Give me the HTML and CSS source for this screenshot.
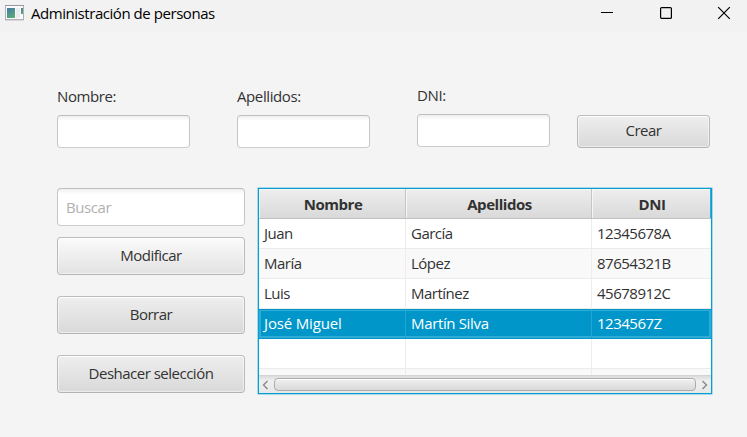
FILE: index.html
```html
<!DOCTYPE html>
<html lang="es">
<head>
<meta charset="utf-8">
<title>Administración de personas</title>
<link rel="stylesheet" href="styles.css">
</head>
<body>
<header class="titlebar">
  <svg class="app-icon" width="20" height="16" viewBox="0 0 20 16">
    <defs><linearGradient id="g" x1="0" y1="0" x2="0.5" y2="1"><stop offset="0" stop-color="#4478a2"/><stop offset="1" stop-color="#58ab7c"/></linearGradient></defs>
    <rect x="0.5" y="0.5" width="18" height="14" fill="#fbfbfc" stroke="#b0b1b7"/>
    <path d="M0 .5h19" stroke="#9697a6"/>
    <path d="M0 15.5h19" stroke="#d8d8d8"/>
    <rect x="2" y="3" width="8" height="10" fill="url(#g)"/>
    <rect x="11" y="3" width="4" height="10" fill="#ececef"/>
    <rect x="16" y="3" width="2" height="6" fill="url(#g)"/>
  </svg>
  <h1 class="title">Administración de personas</h1>
  <div class="controls">
    <svg width="14" height="14" viewBox="0 0 14 14"><path d="M1 6.5h12" stroke="#000"/></svg>
    <svg width="14" height="14" viewBox="0 0 14 14"><rect x="1.6" y="1.6" width="10.8" height="10.8" rx="1" fill="none" stroke="#000" stroke-width="1.2"/></svg>
    <svg width="14" height="14" viewBox="0 0 14 14"><path d="M1.2 1.2l11.6 11.6M12.8 1.2L1.2 12.8" stroke="#000" stroke-width="1.2"/></svg>
  </div>
</header>
<main>
  <form class="fields">
    <label class="field"><span>Nombre:</span><input class="input"></label>
    <label class="field"><span>Apellidos:</span><input class="input"></label>
    <label class="field raised"><span>DNI:</span><input class="input"></label>
    <button type="button" class="button crear">Crear</button>
  </form>
  <div class="content">
    <div class="side">
      <input class="input search" placeholder="Buscar">
      <button class="button hover">Modificar</button>
      <button class="button">Borrar</button>
      <button class="button">Deshacer selección</button>
    </div>
    <div class="table">
      <div class="row head"><div>Nombre</div><div>Apellidos</div><div>DNI</div></div>
      <div class="rows">
        <div class="row"><div>Juan</div><div>García</div><div>12345678A</div></div>
        <div class="row"><div>María</div><div>López</div><div>87654321B</div></div>
        <div class="row"><div>Luis</div><div>Martínez</div><div>45678912C</div></div>
        <div class="row selected"><div>José Miguel</div><div>Martín Silva</div><div>1234567Z</div></div>
        <div class="row"><div></div><div></div><div></div></div>
        <div class="row"><div></div><div></div><div></div></div>
      </div>
      <div class="scrollbar">
        <svg width="7" height="10" viewBox="0 0 7 10"><path d="M5.5 1L1.5 5l4 4" fill="none" stroke="#888" stroke-width="1.4"/></svg>
        <div class="thumb"></div>
        <svg width="7" height="10" viewBox="0 0 7 10"><path d="M1.5 1l4 4-4 4" fill="none" stroke="#888" stroke-width="1.4"/></svg>
      </div>
    </div>
  </div>
</main>
</body>
</html>
```
FILE: styles.css
```css
* { box-sizing: border-box; }
body {
  margin: 0;
  height: 437px;
  overflow: hidden;
  background: #f4f4f4;
  color: #323232;
  font: 15px/18px "Open Sans", "Noto Sans", sans-serif;
  letter-spacing: -0.5px;
}
.titlebar {
  display: flex;
  height: 32px;
  padding: 5px 16px 0 5px;
  background: #f2f2f2;
  color: #000;
}
.app-icon { margin-right: 6px; }
.title { margin: -1px auto 0 0; font-size: 15px; font-weight: 400; letter-spacing: -0.45px; }
.controls { display: flex; gap: 44px; padding-top: 1px; }
.controls svg:first-child { margin-right: 1px; }
main { padding: 55px 35px 0 57px; }
.fields { display: flex; gap: 47px; height: 101px; }
.field { display: block; width: 133px; }
.field span { display: block; height: 27px; letter-spacing: -0.4px; }
.raised { margin-top: -1px; }
.input, .button {
  display: block;
  width: 100%;
  height: 33px;
  margin: 0;
  border: 1px solid #c1c1c1;
  border-radius: 4px;
  color: #323232;
  font: inherit;
  letter-spacing: inherit;
}
.input {
  padding: 0 8px;
  border-color: #bebebe #c6c6c6 #cdcdcd;
  background: linear-gradient(#efefef, #fff 5px);
  outline: 0;
}
.input::placeholder { color: #b1b1b1; opacity: 1; letter-spacing: -0.4px; }
.button {
  padding: 0 0 3px;
  border-color: #bcbcbc #bababa #b4b4b4;
  background: linear-gradient(#eee, #d9d9d9);
  box-shadow: inset 0 0 0 1px #ffffff80, inset 0 1px #fff;
  text-align: center;
}
.field .input, .crear { position: relative; top: 0.5px; }
.crear { width: 133px; margin: 27px 0 0 -20px; }
.content { display: flex; gap: 13px; }
.side { display: flex; flex-direction: column; width: 188px; }
.side .input, .side .button { height: 38px; }
.side .button { margin-top: 21px; }
.side .hover { margin-top: 11px; background: linear-gradient(#fbfbfb, #e2e2e2); }
.table { width: 454px; height: 206px; border: 1px solid #079fd1; box-shadow: 0 0 0 0.5px #60bddc; background: #fff; }
.row { display: grid; grid-template-columns: 147px 186px 1fr; height: 30px; border-bottom: 1px solid #ebebeb; }
.row div { padding: 5px 5px 0; border-right: 1px solid #ededed; white-space: nowrap; }
.row div:last-child { border-right: 0; }
.row:nth-child(even) { background: #f9f9f9; }
.head { background: linear-gradient(#eee, #d9d9d9); border-color: #c1c1c1; font-weight: 700; text-align: center; letter-spacing: -0.45px; }
.row.head div { padding: 6px 4px 0 6px; border-color: #c5c5c5; box-shadow: inset 1px 1px #f6f6f6; }
.row.head div:last-child { border-right: 1px solid #30add7; }
.rows { height: 156px; overflow: hidden; }
.row.selected { background: #0096c9; color: #fff; border-color: #0096c9; box-shadow: inset 0 1px #0096c9, inset 0 0 0 2px #30abd5; letter-spacing: -0.15px; }
.row.selected div { border-color: #24a5d1; }
.selected div:nth-child(2) { letter-spacing: -0.35px; }
.selected div:last-child { letter-spacing: -0.5px; }
.scrollbar { display: flex; align-items: center; gap: 5px; height: 18px; padding: 0 3px; border-top: 1px solid #d4d4d4; background: linear-gradient(#dcdcdc, #efefef 5px, #e8e8e8); }
.thumb { flex: 1; height: 13px; border: 1px solid #aaa; border-radius: 4px; background: linear-gradient(#f0f0f0, #dadada); box-shadow: inset 0 1px #fff; }
```
